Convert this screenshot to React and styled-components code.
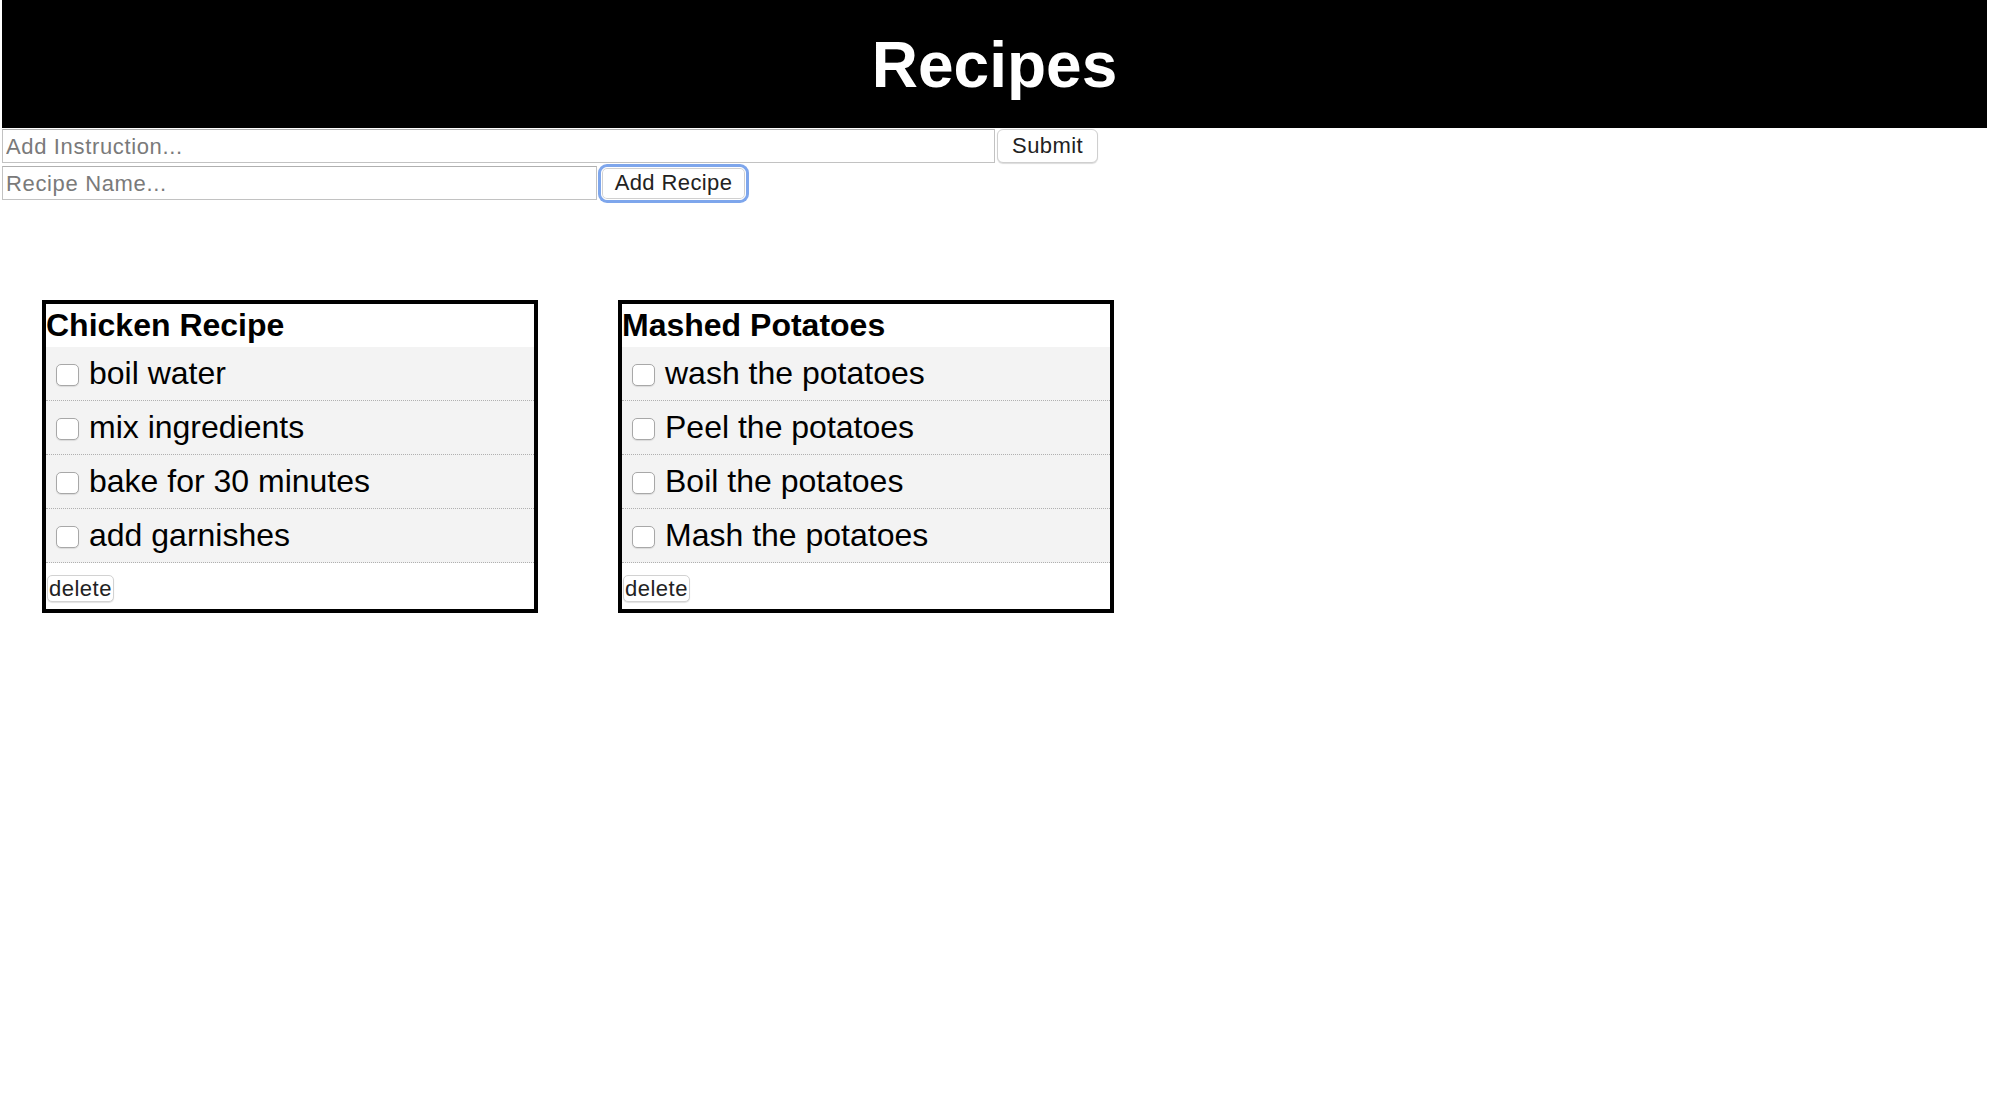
import React from "react";
import styled, { createGlobalStyle } from "styled-components";

const Global = createGlobalStyle`
  html, body { margin: 0; padding: 0; background: #fff; }
  body { font-family: "Liberation Sans", Arial, sans-serif; }
  * { box-sizing: border-box; }
`;

const Page = styled.div`
  padding: 0 7px 0 2px;
  min-height: 1120px;
`;

const Header = styled.header`
  background: #000;
  height: 128px;
  display: flex;
  justify-content: center;
`;

const Title = styled.h1`
  margin: 0;
  color: #fff;
  font-family: "Liberation Sans", Arial, sans-serif;
  font-weight: 700;
  font-size: 64px;
  line-height: 126px;
  padding-top: 2px;
`;

const Forms = styled.div`
  display: flex;
  flex-direction: column;
  gap: 3px;
  padding-top: 1px;
`;

const FormRow = styled.div`
  display: flex;
  align-items: center;
  gap: 2px;
`;

const TextInput = styled.input`
  width: ${(p) => p.$w}px;
  height: 34px;
  border: 1px solid #c2c2c2;
  border-top-color: #b0b0b0;
  padding: 2px 4px 0 3px;
  font-family: "Liberation Sans", Arial, sans-serif;
  font-size: 22px;
  letter-spacing: 0.65px;
  color: #222;
  background: #fff;
  outline: none;
  &::placeholder { color: #7a7a7a; }
`;

const Button = styled.button`
  height: ${(p) => (p.$focus ? 33 : 34)}px;
  width: ${(p) => p.$w}px;
  margin: ${(p) => (p.$focus ? "0 2px" : "0")};
  padding: 0;
  background: #fff;
  border: 1px solid ${(p) => (p.$focus ? "#fff" : "#cfcfcf")};
  border-radius: 6px;
  box-shadow: ${(p) =>
    p.$focus
      ? "0 0 0 1px #d0d0d0 inset, 0 0 0 3px #7ea6ec"
      : "0 1px 1px rgba(0,0,0,0.14)"};
  font-family: "Liberation Sans", Arial, sans-serif;
  font-size: 22px;
  color: #222;
  letter-spacing: 0.4px;
  cursor: pointer;
`;

const Cards = styled.main`
  display: flex;
  align-items: flex-start;
  gap: 80px;
  padding: 100px 0 0 40px;
`;

const Card = styled.section`
  width: 496px;
  border: 4px solid #000;
  background: #fff;
  padding-bottom: 7px;
`;

const CardTitle = styled.h2`
  margin: 0;
  font-family: "Liberation Sans", Arial, sans-serif;
  font-weight: 700;
  font-size: 32px;
  line-height: 43px;
  color: #000;
`;

const List = styled.ul`
  list-style: none;
  margin: 0;
  padding: 0;
  background: #f3f3f3;
`;

const Item = styled.li`
  display: flex;
  align-items: center;
  height: 54px;
  border-bottom: 1px dotted #b0b0b0;
  padding-left: 10px;
  gap: 10px;
  font-size: 32px;
  color: #000;
  font-family: "Liberation Sans", Arial, sans-serif;
`;

const Check = styled.input.attrs({ type: "checkbox" })`
  appearance: none;
  -webkit-appearance: none;
  margin: 3px 0 0 0;
  width: 23px;
  height: 22px;
  border: 1px solid #a8a8a8;
  border-radius: 5px;
  background: #fff;
  box-shadow: 0 1px 1px rgba(0,0,0,0.1);
  flex: none;
`;

const DeleteButton = styled.button`
  margin: 12px 0 0 1px;
  height: 27px;
  width: 67px;
  padding: 0;
  background: #fff;
  border: 1px solid #d2d2d2;
  border-radius: 5px;
  box-shadow: 0 1px 1px rgba(0,0,0,0.12);
  font-family: "Liberation Sans", Arial, sans-serif;
  font-size: 22px;
  line-height: 25px;
  color: #222;
  letter-spacing: 0.5px;
  display: block;
`;

const recipes = [
  {
    name: "Chicken Recipe",
    steps: ["boil water", "mix ingredients", "bake for 30 minutes", "add garnishes"],
  },
  {
    name: "Mashed Potatoes",
    steps: ["wash the potatoes", "Peel the potatoes", "Boil the potatoes", "Mash the potatoes"],
  },
];

export default function App() {
  return (
    <Page>
      <Global />
      <Header>
        <Title>Recipes</Title>
      </Header>
      <Forms>
        <FormRow>
          <TextInput $w={993} placeholder="Add Instruction..." />
          <Button $w={101}>Submit</Button>
        </FormRow>
        <FormRow>
          <TextInput $w={595} placeholder="Recipe Name..." />
          <Button $w={145} $focus>Add Recipe</Button>
        </FormRow>
      </Forms>
      <Cards>
        {recipes.map((r) => (
          <Card key={r.name}>
            <CardTitle>{r.name}</CardTitle>
            <List>
              {r.steps.map((s) => (
                <Item key={s}>
                  <Check />
                  <span>{s}</span>
                </Item>
              ))}
            </List>
            <DeleteButton>delete</DeleteButton>
          </Card>
        ))}
      </Cards>
    </Page>
  );
}
